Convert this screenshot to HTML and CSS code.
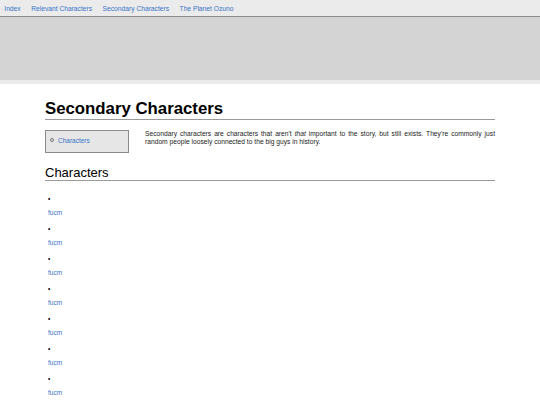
FILE: index.html
```html
<!DOCTYPE html>
<html>
<head>
<meta charset="utf-8">
<title>Secondary Characters</title>
<link rel="stylesheet" href="styles.css">
</head>
<body>
<nav class="topnav">
  <a href="#">Index</a>
  <a href="#">Relevant Characters</a>
  <a href="#">Secondary Characters</a>
  <a href="#">The Planet Ozuno</a>
</nav>
<div class="banner"></div>
<main class="content">
  <h1 class="title">Secondary Characters</h1>
  <div class="toc">
    <ul>
      <li><a href="#characters">Characters</a></li>
    </ul>
  </div>
  <p class="intro">Secondary characters are characters that aren't <em>that</em> important to the story, but still exists. They're commonly just random people loosely connected to the big guys in history.</p>
  <h2 class="section" id="characters">Characters</h2>
  <ul class="gallery">
    <li><a class="item" href="#">fucm</a></li>
    <li><a class="item" href="#">fucm</a></li>
    <li><a class="item" href="#">fucm</a></li>
    <li><a class="item" href="#">fucm</a></li>
    <li><a class="item" href="#">fucm</a></li>
    <li><a class="item" href="#">fucm</a></li>
    <li><a class="item" href="#">fucm</a></li>
  </ul>
</main>
</body>
</html>
```
FILE: styles.css
```css
html, body {
  margin: 0;
  padding: 0;
  background: #ffffff;
  font-family: "Liberation Sans", Arial, sans-serif;
  color: #222222;
}

a {
  color: #3874c6;
  text-decoration: none;
}

.topnav {
  height: 16px;
  background: #ebebeb;
  border-bottom: 1px solid #8c8c8c;
  font-size: 6.7px;
  line-height: 18px;
  white-space: nowrap;
}

.topnav a {
  padding: 0 4.3px;
}

.banner {
  height: 63px;
  background: #d4d4d4;
  border-bottom: 4px solid #ebebeb;
}

.content {
  margin: 0 45px;
}

.title {
  margin: 15px 0 0 0;
  font-size: 16.8px;
  line-height: 20px;
  font-weight: bold;
  color: #000000;
  border-bottom: 1px solid #9a9a9a;
}

.toc {
  float: left;
  width: 82px;
  margin: 10px 16px 0 0;
  background: #e6e6e6;
  border: 1px solid #8a8a8a;
  padding: 6px 0 7px 0;
  font-size: 6.5px;
  line-height: 8px;
}

.toc ul {
  margin: 0;
  padding-left: 4px;
  list-style: none;
}

.toc li::before {
  content: "";
  display: inline-block;
  width: 2px;
  height: 2px;
  border: 0.8px solid #777777;
  border-radius: 50%;
  margin-right: 4px;
  vertical-align: 1px;
}

.intro {
  margin: 10px 0 0 0;
  font-size: 6.7px;
  line-height: 8px;
  text-align: justify;
}

.section {
  clear: both;
  margin: 0;
  padding-top: 12px;
  font-size: 13px;
  line-height: 15px;
  font-weight: normal;
  color: #000000;
  border-bottom: 1px solid #9a9a9a;
}

.gallery {
  margin: 14px 0 0 0;
  padding: 0 0 0 3px;
  list-style: none;
  font-size: 6.5px;
  line-height: 8px;
}

.gallery li {
  margin-bottom: 8px;
}

.gallery li::before {
  content: "\2022";
  display: block;
  color: #000000;
}

.gallery .item {
  display: block;
  margin-top: 6px;
}
```
